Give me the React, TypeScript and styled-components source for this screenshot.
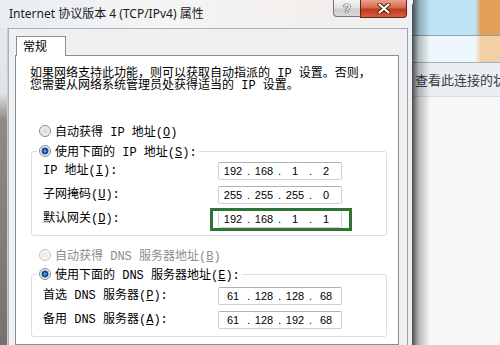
import styled, { createGlobalStyle } from "styled-components";

const GlobalStyle = createGlobalStyle`
  html, body {
    margin: 0;
    padding: 0;
  }
  body {
    width: 500px;
    height: 345px;
    overflow: hidden;
    background: #f7f7f7;
    font-family: "Liberation Mono", "Noto Sans CJK SC", monospace;
    font-size: 12px;
    color: #000;
  }
`;

const Screen = styled.div`
  display: flex;
  width: 500px;
  height: 345px;
  overflow: hidden;
`;

const Dialog = styled.div`
  width: 413px;
  flex-shrink: 0;
  display: flex;
  flex-direction: column;
  box-sizing: border-box;
  background: #eef1f4;
  border-right: 1px solid #4d535b;
  border-top-right-radius: 6px;
  position: relative;
  z-index: 1;
`;

const TitleBar = styled.div`
  height: 28px;
  display: flex;
  align-items: flex-start;
  background: linear-gradient(to right, #e9edf1 0, #f4f5f6 40%, #f3efec 75%, #eef0f2 100%);
`;

const Title = styled.span`
  padding: 6px 0 0 9px;
  line-height: 16px;
  font-family: "Noto Sans", "Noto Sans CJK SC", sans-serif;
  font-size: 12px;
  color: #1b1b1b;
`;

const Captions = styled.div`
  margin-left: auto;
  margin-right: 5px;
  display: flex;
`;

const HelpButton = styled.div`
  width: 27px;
  height: 17px;
  box-sizing: border-box;
  border: 1px solid #707884;
  border-top: none;
  border-right: none;
  border-bottom-left-radius: 4px;
  background: linear-gradient(to bottom, #f4f4f4 0, #e2e2e2 50%, #cdcdcd 55%, #d9d9d9 100%);
  display: flex;
  align-items: center;
  justify-content: center;
  font-family: "Liberation Sans", sans-serif;
  font-weight: bold;
  font-size: 13px;
  color: #f2f2f6;
  text-shadow: 0 0 1px #3b3f55, 0 0 1px #3b3f55, 0 0 1px #3b3f55;
`;

const CloseButton = styled.div`
  width: 47px;
  height: 18px;
  box-sizing: border-box;
  border: 1px solid #6b2418;
  border-top: none;
  border-bottom-right-radius: 4px;
  background: linear-gradient(to bottom, #eaa08c 0, #d8684c 45%, #c43a1e 55%, #d55f3f 100%);
  display: flex;
  align-items: center;
  justify-content: center;
`;

const Body = styled.div`
  flex: 1;
  display: flex;
  min-height: 0;
`;

const LeftFrame = styled.div`
  width: 8px;
  flex-shrink: 0;
  background: linear-gradient(to bottom, #e6eaee 0, #dfe3e6 65px, #8f8a85 92px, #77726d 100%);
  box-shadow: inset -1px 0 0 #c9ced4;
`;

const RightFrame = styled.div`
  width: 4px;
  flex-shrink: 0;
  background: #eef1f4;
`;

const Client = styled.div`
  width: 400px;
  box-sizing: border-box;
  display: flex;
  flex-direction: column;
  background: #f0f0f0;
  border-left: 1px solid #a8b0b9;
  border-top: 1px solid #a8b0b9;
  border-right: 1px solid #9aa2ab;
  padding: 7px 8px 0 6px;
`;

const TabStrip = styled.div`
  display: flex;
  position: relative;
  z-index: 1;
  margin-bottom: -1px;
`;

const Tab = styled.div`
  width: 50px;
  height: 20px;
  margin-left: 1px;
  box-sizing: border-box;
  border: 1px solid #898c95;
  border-bottom: none;
  background: #fff;
  padding-left: 6px;
  line-height: 18px;
  font-family: "Noto Sans CJK SC", sans-serif;
`;

const Panel = styled.div`
  flex: 1;
  border: 1px solid #898c95;
  background: #fff;
  padding-top: 12px;
  display: flex;
  flex-direction: column;
`;

const Intro = styled.p`
  margin: 0 0 0 14px;
  line-height: 12px;
  white-space: pre;
`;

const RadioRow = styled.div<{ $disabled?: boolean; $top: number }>`
  display: flex;
  align-items: center;
  gap: 4px;
  height: 18px;
  margin: ${p => p.$top}px 0 0 23px;
  white-space: pre;
  color: ${p => (p.$disabled ? "#8d8d8d" : "#000")};
`;

const Radio = styled.span<{ $checked?: boolean; $disabled?: boolean }>`
  width: 12px;
  height: 12px;
  flex-shrink: 0;
  box-sizing: border-box;
  border-radius: 50%;
  border: 1px solid ${p => (p.$disabled ? "#c2c2c2" : "#8b8b8b")};
  background: ${p =>
    p.$checked
      ? "radial-gradient(circle at 50% 50%, #8cc0ee 0, #2c6cb4 1.5px, #123d7c 3px, #c9dcec 3.8px, #eef3f7 5px)"
      : p.$disabled
      ? "radial-gradient(circle, #ececec 0, #f6f6f6 5px)"
      : "radial-gradient(circle, #d6d6d6 0, #e4e4e4 3px, #f8f8f8 6px)"};
`;

const Group = styled.fieldset<{ $top: number }>`
  margin: ${p => p.$top}px 11px 0 15px;
  padding: 2px 10px 7px 11px;
  border: 1px solid #d5dfe5;
  border-radius: 3px;
  min-width: 0;
`;

const GroupLegend = styled.legend`
  display: flex;
  align-items: center;
  gap: 4px;
  height: 18px;
  padding: 0 2px;
  margin-left: -6px;
  white-space: pre;
`;

const Rows = styled.div<{ $pad: number }>`
  display: grid;
  grid-template-columns: 175px 124px;
  row-gap: 6px;
  padding-top: ${p => p.$pad}px;
`;

const Label = styled.span`
  height: 18px;
  line-height: 18px;
  white-space: pre;
`;

const Key = styled.span`
  text-decoration: underline;
`;

const IpBox = styled.div`
  position: relative;
  height: 18px;
  box-sizing: border-box;
  border: 1px solid #cdd1d6;
  border-top-color: #adb2b8;
  border-radius: 2px;
  background: #fff;
  padding: 0 1px;
  display: flex;
  align-items: center;
  font-family: "Liberation Sans", sans-serif;
  font-size: 11px;
  color: #000;
`;

const Octet = styled.span`
  width: 26px;
  text-align: center;
`;

const Dot = styled.span`
  width: 5px;
  text-align: center;
`;

const Highlight = styled.span`
  position: absolute;
  left: -9px;
  top: -3px;
  width: 142px;
  height: 23px;
  box-sizing: border-box;
  border: 3px solid #2f7434;
`;

const BackWindow = styled.div`
  flex: 1;
  display: flex;
  flex-direction: column;
  position: relative;
  background: #f7f7f7;

  &::before {
    content: "";
    position: absolute;
    left: 0;
    top: 0;
    bottom: 0;
    width: 17px;
    background: linear-gradient(to right, rgba(0, 0, 0, 0.62), rgba(0, 0, 0, 0.25) 35%, rgba(0, 0, 0, 0));
  }
`;

const BackBand = styled.div<{ $h: number; $left: string; $right: string; $line: string }>`
  height: ${p => p.$h}px;
  flex-shrink: 0;
  background: linear-gradient(to right, ${p => p.$left} 0, ${p => p.$left} 62px, ${p => p.$right} 68px, ${p => p.$right} 100%);
  border-bottom: 1px solid ${p => p.$line};
`;

const BackRow = styled.div`
  height: 33px;
  flex-shrink: 0;
  background: #eaeff4;
  border-bottom: 1px solid #d2dae3;
  padding-left: 2px;
  display: flex;
  align-items: center;
  white-space: nowrap;
  overflow: hidden;
  font-family: "Noto Sans CJK SC", sans-serif;
  font-size: 13px;
  color: #3c3c3c;
`;

function IpField({ parts, marked }: { parts: string[]; marked?: boolean }) {
  return (
    <IpBox>
      {parts.map((v, i) => (
        <>
          {i > 0 && <Dot key={"d" + i}>.</Dot>}
          <Octet key={"o" + i}>{v}</Octet>
        </>
      ))}
      {marked && <Highlight />}
    </IpBox>
  );
}

function CloseGlyph() {
  return (
    <svg width="14" height="11" viewBox="0 0 14 11">
      <path d="M2.5 1.5 L11.5 9.5 M11.5 1.5 L2.5 9.5" stroke="#4a1a12" strokeWidth="4" strokeLinecap="round" />
      <path d="M2.5 1.5 L11.5 9.5 M11.5 1.5 L2.5 9.5" stroke="#ffffff" strokeWidth="2.2" strokeLinecap="round" />
    </svg>
  );
}

export default function App() {
  return (
    <>
      <GlobalStyle />
      <Screen>
        <Dialog>
          <TitleBar>
            <Title>Internet 协议版本 4 (TCP/IPv4) 属性</Title>
            <Captions>
              <HelpButton>?</HelpButton>
              <CloseButton>
                <CloseGlyph />
              </CloseButton>
            </Captions>
          </TitleBar>
          <Body>
            <LeftFrame />
            <Client>
              <TabStrip>
                <Tab>常规</Tab>
              </TabStrip>
              <Panel>
                <Intro>
                  如果网络支持此功能，则可以获取自动指派的 IP 设置。否则，
                  <br />
                  您需要从网络系统管理员处获得适当的 IP 设置。
                </Intro>

                <RadioRow $top={30}>
                  <Radio />
                  <span>
                    自动获得 IP 地址(<Key>O</Key>)
                  </span>
                </RadioRow>
                <Group $top={2}>
                  <GroupLegend>
                    <Radio $checked />
                    <span>
                      使用下面的 IP 地址(<Key>S</Key>):
                    </span>
                  </GroupLegend>
                  <Rows $pad={0}>
                    <Label>
                      IP 地址(<Key>I</Key>):
                    </Label>
                    <IpField parts={["192", "168", "1", "2"]} />
                    <Label>
                      子网掩码(<Key>U</Key>):
                    </Label>
                    <IpField parts={["255", "255", "255", "0"]} />
                    <Label>
                      默认网关(<Key>D</Key>):
                    </Label>
                    <IpField parts={["192", "168", "1", "1"]} marked />
                  </Rows>
                </Group>

                <RadioRow $top={10} $disabled>
                  <Radio $disabled />
                  <span>
                    自动获得 DNS 服务器地址(<Key>B</Key>)
                  </span>
                </RadioRow>
                <Group $top={1}>
                  <GroupLegend>
                    <Radio $checked />
                    <span>
                      使用下面的 DNS 服务器地址(<Key>E</Key>):
                    </span>
                  </GroupLegend>
                  <Rows $pad={2}>
                    <Label>
                      首选 DNS 服务器(<Key>P</Key>):
                    </Label>
                    <IpField parts={["61", "128", "128", "68"]} />
                    <Label>
                      备用 DNS 服务器(<Key>A</Key>):
                    </Label>
                    <IpField parts={["61", "128", "192", "68"]} />
                  </Rows>
                </Group>
              </Panel>
            </Client>
            <RightFrame />
          </Body>
        </Dialog>
        <BackWindow>
          <BackBand $h={35} $left="#bde4f4" $right="#e59f55" $line="#8da3b3" />
          <BackBand $h={26} $left="#eef7fb" $right="#f4cfa3" $line="#a3b0bc" />
          <BackRow>查看此连接的状态</BackRow>
        </BackWindow>
      </Screen>
    </>
  );
}
